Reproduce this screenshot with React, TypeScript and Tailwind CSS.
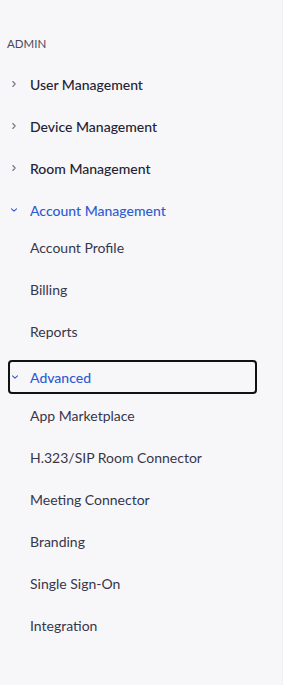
import React from "react";

const Chevron = ({ open, color }: { open?: boolean; color: string }) => (
  <svg width="8" height="8" viewBox="0 0 8 8" fill="none" className="shrink-0">
    {open ? (
      <path d="M1.5 2.8 L4 5.2 L6.5 2.8" stroke={color} strokeWidth="1.1" strokeLinecap="round" strokeLinejoin="round" />
    ) : (
      <path d="M2.8 1.5 L5.2 4 L2.8 6.5" stroke={color} strokeWidth="1.1" strokeLinecap="round" strokeLinejoin="round" />
    )}
  </svg>
);

const Top = ({ label, open }: { label: string; open?: boolean }) => (
  <div className="h-[42px] flex items-center pl-[10px]">
    <span className="w-[20px] flex items-center">
      <Chevron open={open} color={open ? "#2f5bd0" : "#75757f"} />
    </span>
    <span className={`text-[14px] font-medium ${open ? "text-[#2f5bd0]" : "text-[#232333]"}`}>{label}</span>
  </div>
);

const Sub = ({ label }: { label: string }) => (
  <div className="h-[42px] flex items-center pl-[30px] text-[14px] text-[#36364a]">{label}</div>
);

export default function App() {
  return (
    <div className="w-[303px] h-[685px] bg-white flex" style={{ fontFamily: "Lato, 'Open Sans', sans-serif" }}>
      <div className="w-[283px] h-full bg-[#f7f7fa] border-r border-[#f0f0f3] flex flex-col">
        <div className="pt-[37px] pl-[7px] text-[11.5px] text-[#4a4a5a] leading-[14px]">ADMIN</div>
        <div className="mt-[12px] flex flex-col">
          <Top label="User Management" />
          <Top label="Device Management" />
          <Top label="Room Management" />
          <Top label="Account Management" open />
          <div className="-mt-[5px] flex flex-col">
            <Sub label="Account Profile" />
            <Sub label="Billing" />
            <Sub label="Reports" />
            <div className="pt-[8px] pl-[8px] pr-[25px]">
              <div className="h-[34px] flex items-center border-2 border-[#111] rounded-[4px]">
                <span className="w-[20px] pl-[1px] flex items-center">
                  <Chevron open color="#2f5bd0" />
                </span>
                <span className="text-[14px] font-medium text-[#2f5bd0]">Advanced</span>
              </div>
            </div>
            <Sub label="App Marketplace" />
            <Sub label="H.323/SIP Room Connector" />
            <Sub label="Meeting Connector" />
            <Sub label="Branding" />
            <Sub label="Single Sign-On" />
            <Sub label="Integration" />
          </div>
        </div>
      </div>
    </div>
  );
}
